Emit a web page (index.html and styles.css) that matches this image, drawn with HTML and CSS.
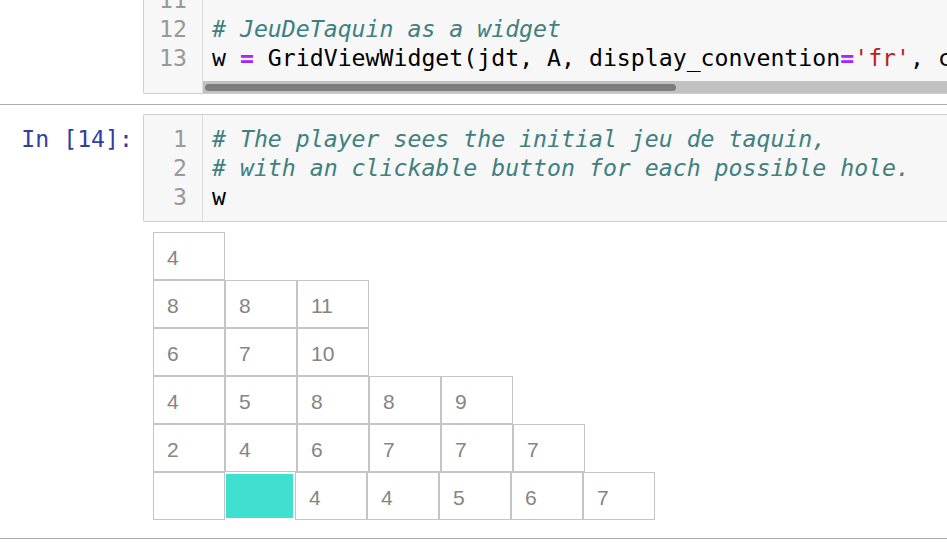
FILE: index.html
```html
<!DOCTYPE html>
<html>
<head>
<meta charset="utf-8">
<link rel="stylesheet" href="styles.css">
</head>
<body>
<div class="page">
  <div class="cell cell-first">
    <div class="prompt"></div>
    <div class="input">
      <div class="gutter">
        <div class="ln">11</div>
        <div class="ln">12</div>
        <div class="ln">13</div>
      </div>
      <div class="code-wrap">
        <div class="code">
          <div class="line">&nbsp;</div>
          <div class="line"><span class="cm"># JeuDeTaquin as a widget</span></div>
          <div class="line">w <span class="op">=</span> GridViewWidget(jdt, A, display_convention<span class="op">=</span><span class="str">'fr'</span>, cell_layout<span class="op">=</span>buttons)</div>
        </div>
        <div class="hscroll"><div class="thumb"></div></div>
      </div>
    </div>
  </div>

  <div class="sep"></div>

  <div class="cell cell-second">
    <div class="prompt">In [14]:</div>
    <div class="input">
      <div class="gutter">
        <div class="ln">1</div>
        <div class="ln">2</div>
        <div class="ln">3</div>
      </div>
      <div class="code-wrap">
        <div class="code">
          <div class="line"><span class="cm"># The player sees the initial jeu de taquin,</span></div>
          <div class="line"><span class="cm"># with an clickable button for each possible hole.</span></div>
          <div class="line">w</div>
        </div>
      </div>
    </div>
  </div>

  <div class="output">
    <div class="grid">
      <div class="row"><div class="c">4</div></div>
      <div class="row"><div class="c">8</div><div class="c">8</div><div class="c">11</div></div>
      <div class="row"><div class="c">6</div><div class="c">7</div><div class="c">10</div></div>
      <div class="row"><div class="c">4</div><div class="c">5</div><div class="c">8</div><div class="c">8</div><div class="c">9</div></div>
      <div class="row"><div class="c">2</div><div class="c">4</div><div class="c">6</div><div class="c">7</div><div class="c">7</div><div class="c">7</div></div>
      <div class="row"><div class="c"></div><div class="hole"></div><div class="c">4</div><div class="c">4</div><div class="c">5</div><div class="c">6</div><div class="c">7</div></div>
    </div>
  </div>

  <div class="sep sep-bottom"></div>
</div>
</body>
</html>
```

FILE: styles.css
```css
html, body {
  margin: 0;
  padding: 0;
  background: #ffffff;
}

.page {
  width: 947px;
  height: 545px;
  overflow: hidden;
  font-family: "DejaVu Sans Mono", monospace;
  font-size: 23.2px;
}

.cell {
  display: flex;
  align-items: flex-start;
}

.cell-first {
  margin-top: -26px;
}

.prompt {
  width: 133px;
  flex: 0 0 133px;
  padding-right: 10px;
  padding-top: 10px;
  text-align: right;
  color: #303F9F;
  line-height: 29px;
  white-space: nowrap;
}

.input {
  flex: 1 0 auto;
  display: flex;
  background: #f7f7f7;
  border: 1px solid #cfcfcf;
  border-right: none;
  border-radius: 2px 0 0 2px;
  min-width: 0;
  overflow: hidden;
}

.gutter {
  width: 43px;
  flex: 0 0 43px;
  padding-right: 15px;
  border-right: 1px solid #dddddd;
  padding-top: 10px;
  text-align: right;
  color: #999999;
}

.cell-second .gutter {
  padding-top: 9px;
}

.ln {
  line-height: 29px;
  height: 29px;
}

.code-wrap {
  flex: 1 1 auto;
  min-width: 0;
  overflow: hidden;
}

.code {
  padding: 10px 0 9px 9px;
  color: #000000;
}

.cell-second .code {
  padding: 9px 0 10px 9px;
}

.line {
  line-height: 29px;
  height: 29px;
  white-space: pre;
}

.cm {
  color: #408080;
  font-style: italic;
}

.op {
  color: #AA22FF;
  font-weight: bold;
}

.str {
  color: #BA2121;
}

.hscroll {
  height: 12px;
  background: #c1c1c1;
  display: flex;
  align-items: center;
  padding-left: 2px;
}

.thumb {
  width: 471px;
  height: 7px;
  border-radius: 4px;
  background: #7d7d7d;
}

.sep {
  height: 1px;
  background: #ababab;
  margin: 10px 0 9px;
}

.sep-bottom {
  margin-top: 18px;
}

.output {
  padding: 10px 0 0 153px;
}

.grid {
  display: flex;
  flex-direction: column;
}

.row {
  display: flex;
  height: 48px;
}

.c {
  box-sizing: border-box;
  width: 72px;
  height: 48px;
  border: 1px solid #c4c4c4;
  padding: 4px 0 0 13px;
  display: flex;
  align-items: center;
  font-family: "Liberation Sans", Arial, sans-serif;
  font-size: 21px;
  color: #858585;
}

.hole {
  width: 67px;
  height: 44px;
  margin: 2px 2px 2px 1px;
  background: #40E0D0;
}
```
